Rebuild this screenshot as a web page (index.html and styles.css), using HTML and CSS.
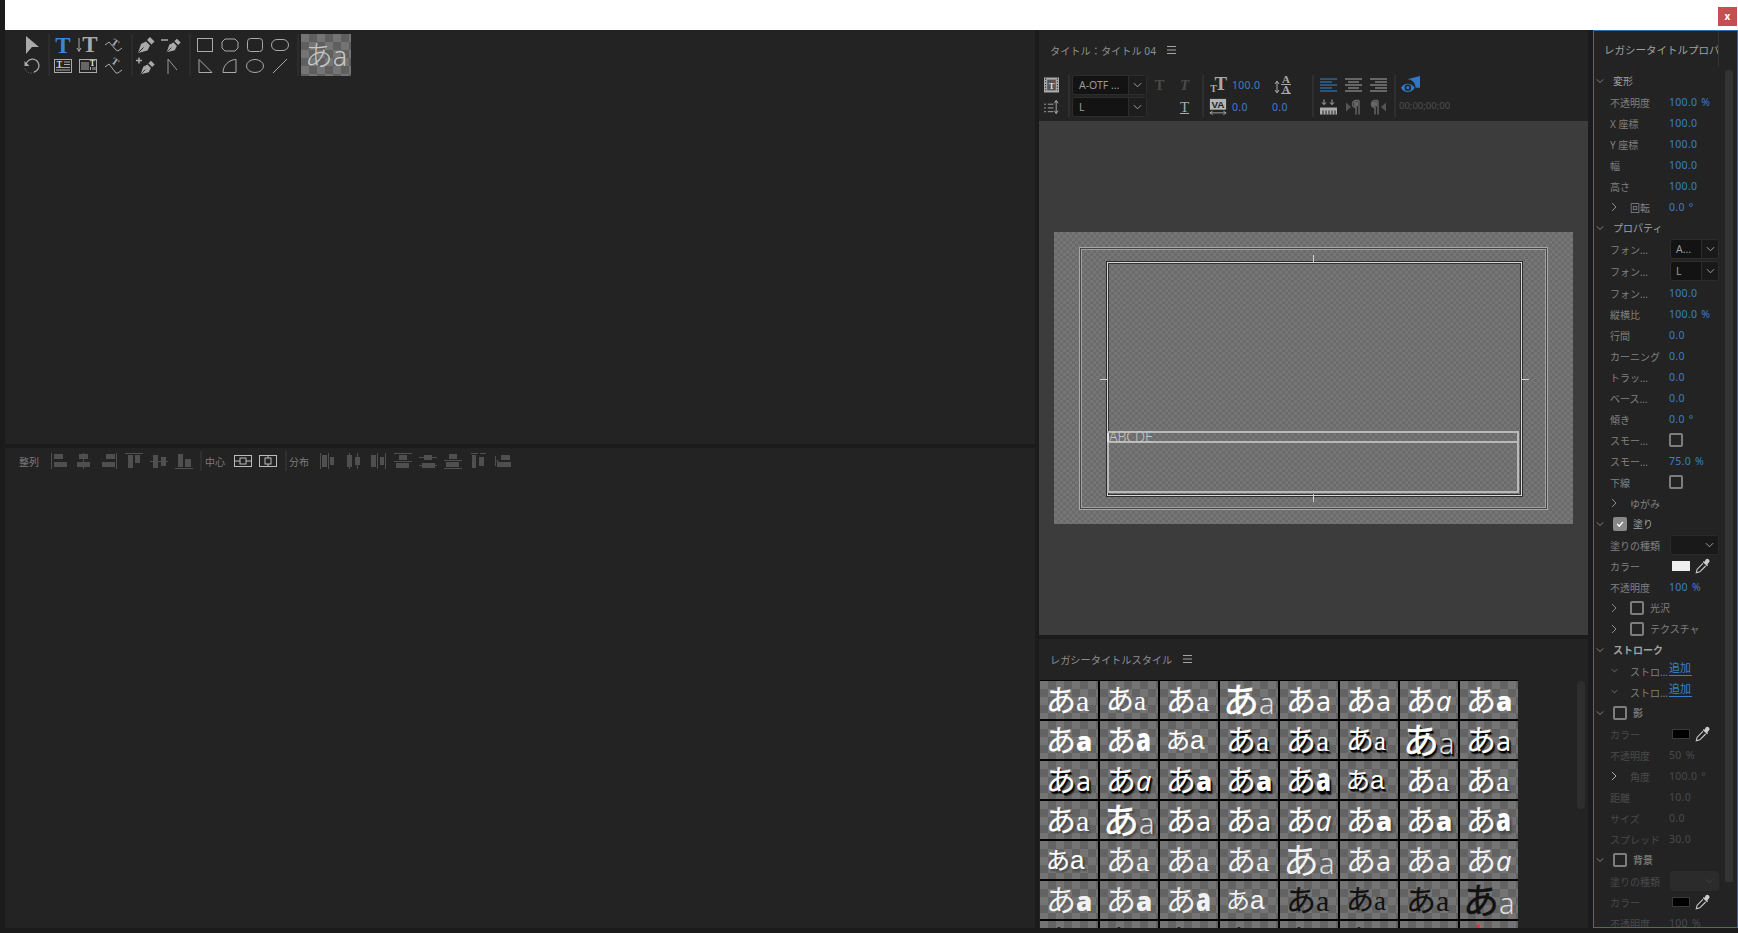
FILE: index.html
```html
<!DOCTYPE html>
<html lang="ja">
<head>
<meta charset="utf-8">
<title>レガシータイトル</title>
<link rel="stylesheet" href="styles.css">
</head>
<body>
<svg class="defs" width="0" height="0" aria-hidden="true">
  <symbol id="chev" viewBox="0 0 10 6"><path d="M1 1l4 4 4-4" fill="none" stroke="currentColor" stroke-width="1"/></symbol>
  <symbol id="chevr" viewBox="0 0 6 10"><path d="M1 1l4 4-4 4" fill="none" stroke="currentColor" stroke-width="1"/></symbol>
  <symbol id="menu" viewBox="0 0 9 8"><path d="M0 .5h9M0 4h9M0 7.500h9" stroke="currentColor" stroke-width="1"/></symbol>
  <symbol id="dropper" viewBox="0 0 15 15"><path d="M10 1.500a2 2 0 0 1 3 3l-1.500 1.500 .8 .8-1 1-4-4 1-1 .8 .8z" fill="#ccc"/><path d="M7.500 5L2 10.500l-.8 3.300 3.300-.8L10 7.500" fill="none" stroke="#ccc" stroke-width="1"/></symbol>
  <symbol id="nib" viewBox="0 0 20 20"><path d="M2 18l3-9 5-2.500 4 4-2.500 5z" fill="#aaa"/><path d="M11 5l3-3 4.500 4.500-3 3z" fill="#aaa"/><path d="M2.500 17.500l5-5" stroke="#232323" stroke-width="1"/></symbol>
  <symbol id="a1" viewBox="0 0 18 18"><path d="M1.500 1v16" stroke="currentColor"/><path d="M4 2h9v5H4zM4 10h13v5H4z" fill="currentColor"/></symbol>
  <symbol id="a2" viewBox="0 0 18 18"><path d="M8.500 1v16" stroke="currentColor"/><path d="M4 2h9v5H4zM2 10h13v5H2z" fill="currentColor"/></symbol>
  <symbol id="a3" viewBox="0 0 18 18"><path d="M16.500 1v16" stroke="currentColor"/><path d="M6 2h9v5H6zM2 10h13v5H2z" fill="currentColor"/></symbol>
  <symbol id="a4" viewBox="0 0 18 18"><path d="M0 1.500h18" stroke="currentColor"/><path d="M3 3h5v13H3zM10 3h5v8h-5z" fill="currentColor"/></symbol>
  <symbol id="a5" viewBox="0 0 18 18"><path d="M0 9.500h18" stroke="currentColor"/><path d="M3 3h5v13H3zM11 5h5v9h-5z" fill="currentColor"/></symbol>
  <symbol id="a6" viewBox="0 0 18 18"><path d="M0 16.500h18" stroke="currentColor"/><path d="M3 2h5v13H3zM10 7h6v8h-6z" fill="currentColor"/></symbol>
  <symbol id="d1" viewBox="0 0 18 18"><path d="M1.500 1v16M9.500 1v16" stroke="currentColor"/><path d="M3 3h5v12H3zM11 5h4v8h-4z" fill="currentColor"/></symbol>
  <symbol id="d2" viewBox="0 0 18 18"><path d="M5.500 1v16M13.500 1v16" stroke="currentColor"/><path d="M3 3h5v12H3zM11 5h5v8h-5z" fill="currentColor"/></symbol>
  <symbol id="d3" viewBox="0 0 18 18"><path d="M8.500 1v16M16.500 1v16" stroke="currentColor"/><path d="M2 3h5v12H2zM11 5h4v8h-4z" fill="currentColor"/></symbol>
  <symbol id="d4" viewBox="0 0 18 18"><path d="M0 1.500h18M0 9.500h18" stroke="currentColor"/><path d="M5 3h8v5H5zM2 11h13v5H2z" fill="currentColor"/></symbol>
  <symbol id="d5" viewBox="0 0 18 18"><path d="M0 5.500h18M0 13.500h18" stroke="currentColor"/><path d="M5 3h8v5H5zM3 11h13v5H3z" fill="currentColor"/></symbol>
  <symbol id="d6" viewBox="0 0 18 18"><path d="M0 8.500h18M0 16.500h18" stroke="currentColor"/><path d="M5 2h8v5H5zM2 10h13v5H2z" fill="currentColor"/></symbol>
  <symbol id="d7" viewBox="0 0 18 18"><path d="M2 1.500h7M11 1.500h6" stroke="currentColor"/><path d="M3 3h4v13H3zM10 5h5v9h-5z" fill="currentColor"/></symbol>
  <symbol id="d8" viewBox="0 0 18 18"><path d="M1.500 4v10M1 9h4" stroke="currentColor"/><path d="M7 3h9v5H7zM3 10h14v5H3z" fill="currentColor"/></symbol>
</svg>

<div class="app">
  <header class="topbar"><span class="close">x</span></header>
  <main class="workspace">

    <section class="col-left">
      <div class="panel panel-tools">
        <div class="tools">
          <div class="tgroup cols1">
            <svg viewBox="0 0 20 20"><path d="M4 1l13 11h-7l-6 7z" fill="#aaa"/></svg>
            <svg viewBox="0 0 20 20"><path d="M4 9a6.500 6.500 0 1 1 8 7" fill="none" stroke="#aaa" stroke-width="1.300"/><path d="M2.500 5v5h5z" fill="#aaa"/><path d="M12 16.500a6.500 6.500 0 0 1-9-4" fill="none" stroke="#777" stroke-dasharray="1 1.500"/></svg>
          </div>
          <div class="tgroup cols3">
            <svg viewBox="0 0 20 20"><text x="10" y="18" text-anchor="middle" class="g-t blue">T</text></svg>
            <svg viewBox="0 0 20 20"><path d="M1 3v13M-1 13l2 3.500 2-3.500" fill="none" stroke="#aaa"/><text x="12" y="17" text-anchor="middle" class="g-t">T</text></svg>
            <svg viewBox="0 0 20 20"><path d="M1 10l4-3 7 8 2 1 4-3" fill="none" stroke="#aaa"/><text x="11" y="11" text-anchor="middle" class="g-s" transform="rotate(35 11 8)">T</text></svg>
            <svg viewBox="0 0 20 20"><rect x="1.500" y="3.500" width="17" height="13" fill="none" stroke="#aaa"/><path d="M11 6h6M11 8.500h6M3 11.500h14M3 14h14" stroke="#aaa"/><text x="6.500" y="10.500" text-anchor="middle" class="g-xs">T</text></svg>
            <svg viewBox="0 0 20 20"><rect x="1.500" y="3.500" width="17" height="13" fill="none" stroke="#aaa"/><path d="M4 6v8M6 6v8M8 6v8M10 6v8M15 11v3M12.500 11v3M17 11v3" stroke="#aaa"/><text x="14.500" y="10" text-anchor="middle" class="g-xs">T</text></svg>
            <svg viewBox="0 0 20 20"><path d="M1 11l4-3 7 9 2 0 4-3" fill="none" stroke="#aaa"/><text x="11" y="9" text-anchor="middle" class="g-s" transform="rotate(35 11 6)">T</text></svg>
          </div>
          <div class="tgroup cols2">
            <svg viewBox="0 0 20 20"><use href="#nib"/></svg>
            <svg viewBox="0 0 20 20"><use href="#nib" x="3" width="17" height="17" y="2"/><path d="M-1 5h7" stroke="#aaa" stroke-width="1.500"/></svg>
            <svg viewBox="0 0 20 20"><use href="#nib" x="3" width="17" height="17" y="3"/><path d="M0 4.500h6M3 1.500v6" stroke="#aaa" stroke-width="1.500"/></svg>
            <svg viewBox="0 0 20 20"><path d="M6 18V3l9 11" fill="none" stroke="#999"/></svg>
          </div>
          <div class="tgroup cols4">
            <svg viewBox="0 0 20 20"><rect x="2.500" y="3.500" width="15" height="13" fill="none" stroke="#aaa"/></svg>
            <svg viewBox="0 0 20 20"><path d="M5 4h10l3 3v6l-3 3H5l-3-3V7z" fill="none" stroke="#aaa"/></svg>
            <svg viewBox="0 0 20 20"><rect x="2.500" y="3.500" width="15" height="13" rx="3" fill="none" stroke="#aaa"/></svg>
            <svg viewBox="0 0 20 20"><rect x="1.500" y="4.500" width="17" height="11" rx="5.500" fill="none" stroke="#aaa"/></svg>
            <svg viewBox="0 0 20 20"><path d="M4 3.500v13h13z" fill="none" stroke="#aaa"/></svg>
            <svg viewBox="0 0 20 20"><path d="M3 16.500h13v-13c-7 0-13 6-13 13z" fill="none" stroke="#aaa"/></svg>
            <svg viewBox="0 0 20 20"><ellipse cx="10" cy="10" rx="8.500" ry="6.500" fill="none" stroke="#aaa"/></svg>
            <svg viewBox="0 0 20 20"><path d="M3 17L17 3" stroke="#aaa" stroke-width="1"/></svg>
          </div>
          <div class="sample"><span class="sample-k">あ</span><span class="sample-l">a</span></div>
        </div>
      </div>

      <div class="panel panel-align">
        <div class="alignbar">
          <span class="al-label">整列</span>
          <div class="al-group g1">
            <svg><use href="#a1"/></svg><svg><use href="#a2"/></svg><svg><use href="#a3"/></svg><svg><use href="#a4"/></svg><svg><use href="#a5"/></svg><svg><use href="#a6"/></svg>
          </div>
          <span class="al-sep"></span>
          <span class="al-label l2">中心</span>
          <div class="al-group g2">
            <svg viewBox="0 0 18 18"><rect x=".5" y="3.500" width="17" height="11" fill="none" stroke="#bbb"/><rect x="6" y="6" width="6" height="6" fill="none" stroke="#bbb"/><path d="M1 9h5M12 9h5" stroke="#bbb"/></svg>
            <svg viewBox="0 0 18 18"><rect x=".5" y="3.500" width="17" height="11" fill="none" stroke="#bbb"/><rect x="6" y="6" width="6" height="6" fill="none" stroke="#bbb"/><path d="M9 4v2M9 12v2" stroke="#bbb"/></svg>
          </div>
          <span class="al-sep s2"></span>
          <span class="al-label l3">分布</span>
          <div class="al-group g3">
            <svg><use href="#d1"/></svg><svg><use href="#d2"/></svg><svg><use href="#d3"/></svg><svg><use href="#d4"/></svg><svg><use href="#d5"/></svg><svg><use href="#d6"/></svg><svg><use href="#d7"/></svg><svg><use href="#d8"/></svg>
          </div>
        </div>
      </div>
    </section>

    <section class="col-mid">
      <div class="panel panel-title">
        <div class="panel-head"><span class="panel-name">タイトル：タイトル 04</span><svg class="menu"><use href="#menu"/></svg></div>
        <div class="ttoolbar">
          <div class="tcol w14">
            <svg viewBox="0 0 14 16"><rect y="1" width="14" height="14" fill="#aaa"/><path d="M1 2.500h1M1 5h1M1 7.500h1M1 10h1M1 12.500h1M12 2.500h1M12 5h1M12 7.500h1M12 10h1M12 12.500h1" stroke="#232323"/><rect x="3" y="3" width="8" height="10" fill="#555"/><text x="7" y="11.500" text-anchor="middle" class="g-xs">T</text></svg>
            <svg viewBox="0 0 16 16"><path d="M0 5h2M0 9h2M0 13h2M4 5h6M4 9h6M4 13h6" stroke="#aaa"/><path d="M13 1v14M11 4l2-3 2 3M11 12l2 3 2-3" fill="none" stroke="#aaa"/></svg>
          </div>
          <span class="tsep s10"></span>
          <div class="tcol w75 m2">
            <div class="dd"><span class="dd-t">A-OTF ...</span><span class="dd-c"><svg><use href="#chev"/></svg></span></div>
            <div class="dd"><span class="dd-t">L</span><span class="dd-c"><svg><use href="#chev"/></svg></span></div>
          </div>
          <div class="tcol w25">
            <span class="tglyph bold off">T</span>
            <span></span>
          </div>
          <div class="tcol w25">
            <span class="tglyph italic off">T</span>
            <span class="tglyph under">T</span>
          </div>
          <span class="tsep s5"></span>
          <div class="tcol w18 m5">
            <svg viewBox="0 0 20 18"><text x="5" y="17" text-anchor="middle" class="g-xs2">T</text><text x="13" y="15" text-anchor="middle" class="g-b">T</text></svg>
            <svg viewBox="0 0 20 18"><rect x="1" y="0" width="18" height="12" fill="#b5b5b5"/><text x="10" y="10" text-anchor="middle" class="g-va">VA</text><path d="M1 15.500h18M1 15.500l3-2M1 15.500l3 2M19 15.500l-3-2M19 15.500l-3 2" stroke="#aaa" fill="none"/></svg>
          </div>
          <div class="tcol w40 m5">
            <span class="val">100.0</span>
            <span class="val">0.0</span>
          </div>
          <div class="tcol w22">
            <svg viewBox="0 0 20 20"><text x="12" y="8" text-anchor="middle" class="g-xs2">A</text><text x="12" y="18" text-anchor="middle" class="g-xs2">A</text><path d="M7 18.500h10M7 9.500h10" stroke="#aaa"/><path d="M3 7v10M1 9l2-3 2 3M1 15l2 3 2-3" fill="none" stroke="#aaa"/></svg>
            <span class="val">0.0</span>
          </div>
          <span class="tsep s18"></span>
          <div class="tcol w17 m6">
            <svg class="lines on" viewBox="0 0 17 17"><path d="M0 2.500h17M0 5.500h12M0 8.500h17M0 11.500h12M0 14.500h17" stroke="currentColor"/></svg>
            <svg viewBox="0 0 17 17"><path d="M4 1v5M2 4l2 2 2-2M12 1v5M10 4l2 2 2-2" fill="none" stroke="#aaa"/><rect x="0" y="9" width="17" height="7" fill="#aaa"/><path d="M3 12v4M6 12v4M9 12v4M12 12v4M15 12v4" stroke="#232323"/></svg>
          </div>
          <div class="tcol w17 m8">
            <svg class="lines" viewBox="0 0 17 17"><path d="M0 2.500h17M3 5.500h11M0 8.500h17M3 11.500h11M0 14.500h17" stroke="currentColor"/></svg>
            <svg viewBox="0 0 17 17"><path d="M1 4v9l5-4.500z" fill="#555"/><path d="M14 2H11a3 3 0 0 0 0 7v7M14 2v14" fill="none" stroke="#666" stroke-width="1.500"/><path d="M9 3h4v5H9z" fill="#666"/></svg>
          </div>
          <div class="tcol w17 m8">
            <svg class="lines" viewBox="0 0 17 17"><path d="M0 2.500h17M5 5.500h12M0 8.500h17M5 11.500h12M0 14.500h17" stroke="currentColor"/></svg>
            <svg viewBox="0 0 17 17"><path d="M16 4v9l-5-4.500z" fill="#555"/><path d="M8 2H5a3 3 0 0 0 0 7v7M8 2v14" fill="none" stroke="#666" stroke-width="1.500"/><path d="M2 3h5v5H2z" fill="#666"/></svg>
          </div>
          <span class="tsep s7"></span>
          <div class="tcol m3">
            <svg class="eye" viewBox="0 0 18 17"><path d="M6 3l12-3v11H14a8 8 0 0 0-8-8z" fill="#2f78c6"/><path d="M0 11c2.500-5 10-5 13 0-3 5.500-10.500 5.500-13 0z" fill="#2f78c6"/><circle cx="6.500" cy="11" r="3" fill="#232323"/><circle cx="6.500" cy="11" r="1.500" fill="#2f78c6"/></svg>
            <span class="tc">00;00;00;00</span>
          </div>
        </div>
        <div class="preview">
          <div class="stage">
            <div class="safe-action">
              <div class="safe-title">
                <span class="tick tick-t"></span><span class="tick tick-b"></span><span class="tick tick-l"></span><span class="tick tick-r"></span>
                <div class="textbox"><div class="textline">ABCDE</div></div>
              </div>
            </div>
          </div>
        </div>
      </div>

      <div class="panel panel-styles">
        <div class="panel-head h-styles"><span class="panel-name">レガシータイトルスタイル</span><svg class="menu"><use href="#menu"/></svg></div>
        <div class="styles-body">
          <div class="thumbs">
            <div class="th ser"><span>あ</span><span>a</span></div>
            <div class="th ser sm"><span>あ</span><span>a</span></div>
            <div class="th ser"><span>あ</span><span>a</span></div>
            <div class="th big"><span>あ</span><span>a</span></div>
            <div class="th san"><span>あ</span><span>a</span></div>
            <div class="th san"><span>あ</span><span>a</span></div>
            <div class="th ita"><span>あ</span><span>a</span></div>
            <div class="th bld"><span>あ</span><span>a</span></div>

            <div class="th bld"><span>あ</span><span>a</span></div>
            <div class="th tal"><span>あ</span><span>a</span></div>
            <div class="th rnd"><span>あ</span><span>a</span></div>
            <div class="th ser sh"><span>あ</span><span>a</span></div>
            <div class="th ser sh"><span>あ</span><span>a</span></div>
            <div class="th ser sh sm"><span>あ</span><span>a</span></div>
            <div class="th big sh"><span>あ</span><span>a</span></div>
            <div class="th san sh"><span>あ</span><span>a</span></div>

            <div class="th san sh"><span>あ</span><span>a</span></div>
            <div class="th ita sh"><span>あ</span><span>a</span></div>
            <div class="th bld sh"><span>あ</span><span>a</span></div>
            <div class="th bld sh"><span>あ</span><span>a</span></div>
            <div class="th tal sh"><span>あ</span><span>a</span></div>
            <div class="th rnd sh"><span>あ</span><span>a</span></div>
            <div class="th ser so"><span>あ</span><span>a</span></div>
            <div class="th ser so"><span>あ</span><span>a</span></div>

            <div class="th ser so"><span>あ</span><span>a</span></div>
            <div class="th big so"><span>あ</span><span>a</span></div>
            <div class="th san so"><span>あ</span><span>a</span></div>
            <div class="th san so"><span>あ</span><span>a</span></div>
            <div class="th ita so"><span>あ</span><span>a</span></div>
            <div class="th bld so"><span>あ</span><span>a</span></div>
            <div class="th bld so"><span>あ</span><span>a</span></div>
            <div class="th tal so"><span>あ</span><span>a</span></div>

            <div class="th rnd so"><span>あ</span><span>a</span></div>
            <div class="th ser ol"><span>あ</span><span>a</span></div>
            <div class="th ser ol"><span>あ</span><span>a</span></div>
            <div class="th ser ol"><span>あ</span><span>a</span></div>
            <div class="th big ol"><span>あ</span><span>a</span></div>
            <div class="th san ol"><span>あ</span><span>a</span></div>
            <div class="th san ol"><span>あ</span><span>a</span></div>
            <div class="th ita ol"><span>あ</span><span>a</span></div>

            <div class="th bld ol"><span>あ</span><span>a</span></div>
            <div class="th bld ol"><span>あ</span><span>a</span></div>
            <div class="th tal ol"><span>あ</span><span>a</span></div>
            <div class="th rnd ol"><span>あ</span><span>a</span></div>
            <div class="th ser dk"><span>あ</span><span>a</span></div>
            <div class="th ser dk sm"><span>あ</span><span>a</span></div>
            <div class="th ser dk"><span>あ</span><span>a</span></div>
            <div class="th big dk"><span>あ</span><span>a</span></div>

            <div class="th san dk"><span>あ</span><span>a</span></div>
            <div class="th ita dk"><span>あ</span><span>a</span></div>
            <div class="th bld dk"><span>あ</span><span>a</span></div>
            <div class="th bld dk"><span>あ</span><span>a</span></div>
            <div class="th tal dk"><span>あ</span><span>a</span></div>
            <div class="th ser dk"><span>あ</span><span>a</span></div>
            <div class="th rnd dk"><span>あ</span><span>a</span></div>
            <div class="th big rd"><span>あ</span><span>a</span></div>
          </div>
          <div class="styles-scroll"></div>
        </div>
      </div>
    </section>

    <aside class="props">
      <div class="props-tab"><span class="props-tab-name">レガシータイトルプロパティ</span></div>
      <div class="props-body">
        <div class="rows">
          <div class="row sec"><svg class="cd"><use href="#chev"/></svg><span>変形</span></div>
          <div class="row"><span class="lbl">不透明度</span><span class="val">100.0 %</span></div>
          <div class="row"><span class="lbl">X 座標</span><span class="val">100.0</span></div>
          <div class="row"><span class="lbl">Y 座標</span><span class="val">100.0</span></div>
          <div class="row"><span class="lbl">幅</span><span class="val">100.0</span></div>
          <div class="row"><span class="lbl">高さ</span><span class="val">100.0</span></div>
          <div class="row exp"><svg class="cr"><use href="#chevr"/></svg><span class="lbl">回転</span><span class="val">0.0 °</span></div>
          <div class="row sec"><svg class="cd"><use href="#chev"/></svg><span>プロパティ</span></div>
          <div class="row r22"><span class="lbl">フォン…</span><div class="dd dd-s"><span class="dd-t">A...</span><span class="dd-c"><svg><use href="#chev"/></svg></span></div></div>
          <div class="row r22"><span class="lbl">フォン…</span><div class="dd dd-s"><span class="dd-t">L</span><span class="dd-c"><svg><use href="#chev"/></svg></span></div></div>
          <div class="row"><span class="lbl">フォン…</span><span class="val">100.0</span></div>
          <div class="row"><span class="lbl">縦横比</span><span class="val">100.0 %</span></div>
          <div class="row"><span class="lbl">行間</span><span class="val">0.0</span></div>
          <div class="row"><span class="lbl">カーニング</span><span class="val">0.0</span></div>
          <div class="row"><span class="lbl">トラッ…</span><span class="val">0.0</span></div>
          <div class="row"><span class="lbl">ベース…</span><span class="val">0.0</span></div>
          <div class="row"><span class="lbl">傾き</span><span class="val">0.0 °</span></div>
          <div class="row"><span class="lbl">スモー…</span><span class="cb"></span></div>
          <div class="row"><span class="lbl">スモー…</span><span class="val">75.0 %</span></div>
          <div class="row"><span class="lbl">下線</span><span class="cb"></span></div>
          <div class="row exp"><svg class="cr"><use href="#chevr"/></svg><span class="lbl">ゆがみ</span></div>
          <div class="row sec"><svg class="cd"><use href="#chev"/></svg><span class="cb on"><svg viewBox="0 0 14 14"><path d="M3 7l3 3 5-6" fill="none" stroke="#fff" stroke-width="2"/></svg></span><span class="sec-l">塗り</span></div>
          <div class="row"><span class="lbl">塗りの種類</span><div class="dd dd-s dd-fill"><span class="dd-c"><svg><use href="#chev"/></svg></span></div></div>
          <div class="row"><span class="lbl">カラー</span><span class="swatch white"></span><svg class="drop"><use href="#dropper"/></svg></div>
          <div class="row"><span class="lbl">不透明度</span><span class="val">100 %</span></div>
          <div class="row exp"><svg class="cr"><use href="#chevr"/></svg><span class="cb"></span><span class="sub-l">光沢</span></div>
          <div class="row exp"><svg class="cr"><use href="#chevr"/></svg><span class="cb"></span><span class="sub-l">テクスチャ</span></div>
          <div class="row sec b"><svg class="cd"><use href="#chev"/></svg><span>ストローク</span></div>
          <div class="row exp"><svg class="cd2"><use href="#chev"/></svg><span class="lbl">ストロ…</span><span class="link">追加</span></div>
          <div class="row exp"><svg class="cd2"><use href="#chev"/></svg><span class="lbl">ストロ…</span><span class="link">追加</span></div>
          <div class="row sec b dimt"><svg class="cd"><use href="#chev"/></svg><span class="cb"></span><span class="sec-l">影</span></div>
          <div class="row dim"><span class="lbl">カラー</span><span class="swatch black"></span><svg class="drop"><use href="#dropper"/></svg></div>
          <div class="row dim"><span class="lbl">不透明度</span><span class="val">50 %</span></div>
          <div class="row exp dim"><svg class="cr bright"><use href="#chevr"/></svg><span class="lbl">角度</span><span class="val">100.0 °</span></div>
          <div class="row dim"><span class="lbl">距離</span><span class="val">10.0</span></div>
          <div class="row dim"><span class="lbl">サイズ</span><span class="val">0.0</span></div>
          <div class="row dim"><span class="lbl">スプレッド</span><span class="val">30.0</span></div>
          <div class="row sec b dimt"><svg class="cd"><use href="#chev"/></svg><span class="cb"></span><span class="sec-l">背景</span></div>
          <div class="row dim"><span class="lbl">塗りの種類</span><div class="dd dd-s dd-fill dd-dim"><span class="dd-c"><svg><use href="#chev"/></svg></span></div></div>
          <div class="row dim"><span class="lbl">カラー</span><span class="swatch black"></span><svg class="drop"><use href="#dropper"/></svg></div>
          <div class="row dim"><span class="lbl">不透明度</span><span class="val">100 %</span></div>
        </div>
        <div class="props-scroll"></div>
      </div>
    </aside>
  </main>
</div>
</body>
</html>
```

FILE: styles.css
```css
* { box-sizing: border-box; }
html, body { margin: 0; padding: 0; height: 100%; overflow: hidden; background: #1b1b1b; }
body { font-family: "Noto Sans", "Noto Sans CJK JP", sans-serif; font-size: 10px; color: #8e8e8e; }
svg { overflow: visible; }
.defs { position: absolute; }

.app { width: 1738px; height: 933px; padding-left: 5px; display: flex; flex-direction: column; }
.topbar { height: 30px; background: #fff; display: flex; justify-content: flex-end; align-items: flex-start; flex: none; }
.close { width: 19px; height: 19px; margin: 7px 1px 0 0; background: #c54f50; color: #fff; font: bold 10px/18px "Noto Sans", sans-serif; text-align: center; }

.workspace { height: 898px; flex: none; display: flex; gap: 4px; }
.panel { background: #232323; }
.col-left { width: 1030px; display: flex; flex-direction: column; gap: 4px; flex: none; }
.panel-tools { height: 414px; flex: none; }
.panel-align { flex: 1; }
.col-mid { width: 549px; display: flex; flex-direction: column; gap: 4px; flex: none; margin-right: 1px; }
.panel-title { height: 605px; flex: none; display: flex; flex-direction: column; }
.panel-styles { flex: 1; display: flex; flex-direction: column; min-height: 0; }

/* left tools */
.tools { display: flex; padding: 4px 0 0 15px; align-items: flex-start; }
.tgroup { display: grid; grid-auto-flow: row; grid-template-rows: 21px 21px; height: 42px; border-right: 2px solid #2c2c2c; justify-items: center; align-items: center; }
.tgroup svg { width: 20px; height: 20px; }
.cols1 { grid-template-columns: 24px; width: 30px; }
.cols3 { grid-template-columns: repeat(3, 25.5px); width: 83px; }
.cols2 { grid-template-columns: repeat(2, 26px); width: 58px; }
.cols4 { grid-template-columns: repeat(4, 25px); width: 108px; padding-left: 1.5px; }
.g-t { font: bold 23px "Liberation Serif", serif; fill: #aaa; }
.g-t.blue { fill: #3b87d4; }
.g-s { font: bold 10px "Liberation Serif", serif; fill: #aaa; }
.g-xs { font: bold 8px "Liberation Serif", serif; fill: #ddd; }
.g-xs2 { font: bold 11px "Liberation Serif", serif; fill: #aaa; }
.g-b { font: bold 21px "Liberation Serif", serif; fill: #aaa; }
.g-va { font: bold 11px "Liberation Sans", sans-serif; fill: #232323; }
.sample { margin-left: 2px; width: 50px; height: 42px; display: flex; align-items: baseline; justify-content: center; line-height: 40px; color: #c8c8c8; background: repeating-conic-gradient(#5f5f5f 0 25%, #747474 0 50%) 0 0 / 16px 16px; font-weight: 300; }
.sample-k { font: 300 28px/40px "Noto Sans CJK JP", sans-serif; }
.sample-l { font: 300 27px/40px "Noto Sans", sans-serif; }

/* align bar */
.alignbar { display: flex; align-items: center; height: 26px; padding-left: 14px; color: #6a6a6a; }
.al-label { width: 20px; flex: none; font-size: 10px; color: #7b7b7b; white-space: nowrap; }
.al-group { display: flex; gap: 7px; color: #4f4f4f; }
.al-group svg { width: 18px; height: 18px; flex: none; }
.g1 { margin: 0 7.5px 0 10.5px; }
.al-sep { width: 2px; height: 20px; background: #2f2f2f; flex: none; }
.l2 { margin-left: 3px; }
.g2 { margin: 0 8px 0 9px; }
.l3 { margin-left: 2px; }
.g3 { margin-left: 10px; }

/* heads */
.panel-head { height: 41px; padding: 0 0 1px 11px; display: flex; align-items: center; gap: 11px; flex: none; }
.panel-name { font-size: 10.200px; color: #8f8f8f; white-space: nowrap; }
.menu { width: 9px; height: 8px; color: #a5a5a5; }
.h-styles { padding-left: 11px; height: 41px; }

/* title toolbar */
.ttoolbar { height: 50px; flex: none; display: flex; padding: 4px 0 0 5px; align-items: flex-start; }
.tcol { display: flex; flex-direction: column; gap: 2px; flex: none; }
.tcol > * { height: 20px; flex: none; }
.w14 { width: 14px; align-items: center; }
.w14 svg { width: 15px; height: 20px; }
.w75 { width: 75px; }
.w25 { width: 25px; align-items: center; }
.w18 { width: 18px; }
.w18 svg { width: 18px; }
.w40 { width: 40px; }
.w22 { width: 22px; }
.w22 svg { width: 20px; margin-left: 2px; }
.w17 { width: 17px; }
.w17 svg { width: 17px; }
.m2 { margin-left: 2px; }
.m3 { margin-left: 3px; }
.m5 { margin-left: 5px; }
.m6 { margin-left: 6px; }
.m8 { margin-left: 8px; }
.tsep { width: 2px; height: 42px; background: #2f2f2f; flex: none; }
.s10 { margin-left: 10px; }
.s5 { margin-left: 5px; }
.s18 { margin-left: 18px; }
.s7 { margin-left: 7px; }
.lines { color: #aaa; }
.lines.on { color: #3a84d2; }
.eye { width: 19px; margin-left: 2px; }
.tc { font-size: 9.500px; color: #4f4f4f; line-height: 18px; width: 50px; white-space: nowrap; }
.tglyph { font: bold 15px/20px "Liberation Serif", serif; color: #aaa; }
.tglyph.off { color: #4a4a4a; }
.tglyph.italic { font-style: italic; }
.tglyph.under { text-decoration: underline; font-weight: 400; }
.val { font-size: 10.500px; line-height: 20px; letter-spacing: .3px; word-spacing: 1px; color: #3a7fc6; white-space: nowrap; }

.dd { display: flex; align-items: stretch; background: #131313; border: 1px solid #2d2d2d; border-radius: 3px; overflow: hidden; }
.dd-t { flex: 1; padding-left: 6px; font-size: 10.500px; line-height: 18px; color: #9a9a9a; white-space: nowrap; overflow: hidden; }
.dd-c { width: 18px; flex: none; display: flex; align-items: center; justify-content: center; background: #1d1d1d; border-left: 1px solid #2d2d2d; color: #aaa; }
.dd-c svg { width: 9px; height: 6px; }

/* preview */
.preview { flex: 1; background: #3c3c3c; display: flex; align-items: center; justify-content: center; min-height: 0; }
.stage { width: 519px; height: 292px; background: repeating-conic-gradient(#6b6b6b 0 25%, #767676 0 50%) 0 0 / 6px 6px; padding: 15px 25px 14px 25px; display: flex; }
.safe-action { flex: 1; border: 1px solid #a8a8a8; box-shadow: inset 0 0 0 1px #444, inset 0 0 0 2px #a0a0a0; padding: 14px 25px 13px 27px; display: flex; }
.safe-title { flex: 1; position: relative; border: 1px solid #d8d8d8; box-shadow: 0 0 0 1px #2c2c2c, inset 0 0 0 1px #333; display: flex; flex-direction: column; justify-content: flex-end; padding: 0 2px 2px 0; }
.tick { position: absolute; background: #d0d0d0; }
.tick-t { left: calc(50% - 2px); top: -8px; width: 1px; height: 7px; }
.tick-b { left: calc(50% - 2px); bottom: -7px; width: 1px; height: 8px; }
.tick-l { top: 50%; left: -8px; width: 7px; height: 1px; }
.tick-r { top: 50%; right: -8px; width: 7px; height: 1px; }
.textbox { height: 62px; border: 2px solid #b9b9b9; margin-left: -1px; }
.textline { height: 8px; border-bottom: 2px solid #b9b9b9; box-sizing: content-box; font: 300 14px/8px "Noto Sans", sans-serif; color: #c8c8c8; border-left: 2px solid #e4e4e4; margin-left: -2px; }

/* styles */
.styles-body { flex: 1; display: flex; min-height: 0; padding-left: 1px; }
.thumbs { width: 478px; height: 248px; overflow: hidden; background: #000; padding-top: 1px; display: grid; grid-template-columns: repeat(8, 58px); grid-auto-rows: 38px; gap: 2px; }
.th { overflow: hidden; white-space: nowrap; padding-left: 6px; line-height: 35px; color: #fff; background: repeating-conic-gradient(#636363 0 25%, #747474 0 50%) 0 0 / 16px 16px; }
.th span:first-child { font: 400 30px/35px "Noto Sans CJK JP", sans-serif; -webkit-text-stroke: .2px currentColor; }
.th span:last-child { font-family: "Noto Sans", sans-serif; font-size: 25px; }
.ser span:last-child { font: 400 30px/35px "Liberation Serif", serif; }
.san span:last-child { font: 400 27px/35px "Noto Sans", sans-serif; }
.ita span:last-child { font: italic 400 27px/35px "Noto Sans", sans-serif; }
.bld span:last-child { font: 900 26px/35px "Noto Sans", sans-serif; }
.tal span:last-child { display: inline-block; font: 900 24px/35px "Noto Sans", sans-serif; transform: scaleY(1.3); transform-origin: 50% 75%; }
.rnd { padding-left: 6px; }
.rnd span:first-child { font-size: 24px; }
.rnd span:last-child { font: 400 26px/35px "Liberation Sans", sans-serif; }
.big { padding-left: 3px; }
.big span:first-child { font-size: 36px; -webkit-text-stroke: .6px currentColor; }
.big span:last-child { font: 300 29px/35px "Noto Sans", sans-serif; color: #ddd; }
.sm span:first-child { font-size: 28px; }
.sm span:last-child { font-size: 27px; }
.sh { text-shadow: 1px 2px 0 #000, 2px 3px 1px #222; }
.so { text-shadow: 2px 2px 2px #444; }
.ol { color: #f2f2f2; }
.ol span:first-child { -webkit-text-stroke: 0; }
.dk { color: #111; }
.rd { color: #e03030; }
.rd span:last-child { color: #111; }
.styles-scroll { width: 8px; height: 128px; margin: 1px 0 0 59px; background: #2e2e2e; border-radius: 4px; }

/* properties */
.props { width: 145px; flex: none; border: 1px solid #2f6fae; background: #232323; display: flex; flex-direction: column; }
.props-tab { height: 39px; flex: none; padding-left: 10px; }
.props-tab-name { display: block; width: 114px; height: 36px; line-height: 38px; overflow: hidden; white-space: nowrap; font-size: 10.500px; color: #a0a0a0; border-right: 1px solid #333; box-sizing: content-box; }
.props-body { flex: 1; display: flex; min-height: 0; }
.rows { width: 131px; flex: none; overflow: hidden; }
.props-scroll { width: 8px; height: 812px; background: #333; border-radius: 4px 4px 0 0; flex: none; }
.row { height: 21px; display: flex; align-items: center; padding-left: 16px; white-space: nowrap; }
.r22 { height: 22px; }
.lbl { width: 59px; flex: none; overflow: hidden; font-size: 10px; color: #808080; margin-top: 2px; }
.r22 .lbl { margin-top: 0; }
.row .val { line-height: 21px; margin-top: 2px; }
.sec { padding-left: 2px; color: #a0a0a0; font-size: 10px; }
.sec > span:not(.cb):not(.sec-l) { margin-left: 9px; }
.cd { width: 8px; height: 6px; flex: none; color: #9a9a9a; }
.b { font-weight: 700; }
.sec .cb { margin-left: 9px; }
.sec-l { margin-left: 6px; }
.dimt .sec-l { color: #777; }
.exp { padding-left: 17px; }
.cr { width: 6px; height: 10px; flex: none; margin-right: 13px; color: #8a8a8a; }
.cr.bright { color: #aaa; }
.cd2 { width: 7px; height: 5px; flex: none; margin: 0 12px 0 0; color: #8a8a8a; }
.exp .lbl { width: 39px; }
.sub-l { margin-left: 6px; color: #808080; }
.cb { width: 14px; height: 14px; flex: none; border: 2px solid #7d7d7d; border-radius: 2px; display: block; }
.cb.on { background: #888; border-color: #888; }
.cb.on svg { display: block; width: 10px; height: 10px; }
.swatch { width: 18px; height: 10px; margin-left: 3px; flex: none; border: 1px solid #444; }
.swatch.white { background: #eee; border-color: #eee; }
.swatch.black { background: #000; border-color: #3a3a3a; }
.drop { width: 16px; height: 16px; margin-left: 5px; flex: none; }
.link { color: #3a7fc6; font-size: 11px; line-height: 14px; border-bottom: 1px solid #3a7fc6; width: 23px; margin-top: -4px; }
.dim .lbl, .dim .val { color: #4a4a4a; }
.dd-s { width: 49px; height: 20px; margin-left: 1px; }
.dd-s .dd-t { padding-left: 5px; }
.dd-s .dd-c { width: 17px; background: #191919; }
.dd-fill { background: #191919; justify-content: flex-end; border-color: #2a2a2a; }
.dd-fill .dd-c { border-left: 0; }
.dd-dim { background: #2b2b2b; border-color: #2b2b2b; }
.dd-dim .dd-c { background: #2b2b2b; color: #444; }
```
